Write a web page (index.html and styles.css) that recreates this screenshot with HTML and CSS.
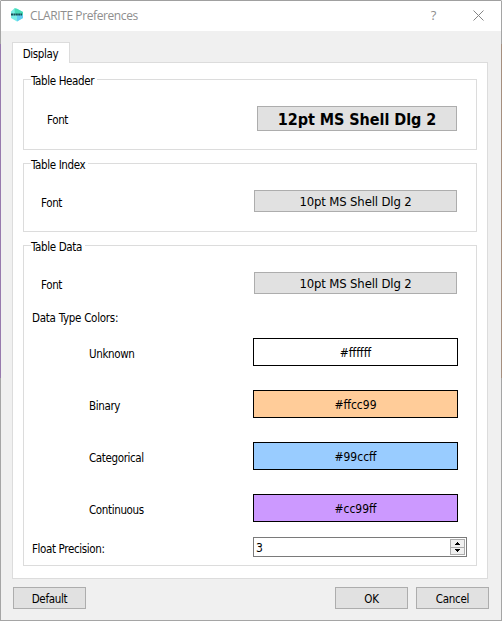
FILE: index.html
```html
<!DOCTYPE html>
<html lang="en">
<head>
<meta charset="utf-8">
<title>CLARITE Preferences</title>
<link rel="stylesheet" href="styles.css">
</head>
<body>
<div class="window">
  <header class="titlebar">
    <svg class="logo" width="14" height="14" viewBox="0 0 14 14"><path d="M1 3.500 4.500.3 7 .8 13 4v6L7 13.500 1 10z" fill="#7aeee6"/><path d="M4.500.3 7 .8 13 4v3H5z" fill="#48dcb8"/><path d="M7 7h6v3L7 13.500z" fill="#62cdf2"/><path d="M1 6.500h11" stroke="#174d58" stroke-width="2" stroke-dasharray="2 .4"/></svg>
    <h1 class="title">CLARITE Preferences</h1>
    <span class="help">?</span>
    <svg class="close" width="11" height="11" viewBox="0 0 11 11"><path d="M.5.5l10 10M10.500.5l-10 10" stroke="#858585" fill="none"/></svg>
  </header>
  <nav class="tabs"><span class="tab">Display</span></nav>
  <main class="panel">
    <section class="group header-group">
      <h2 class="legend"><span>Table Header</span></h2>
      <div class="row"><span class="label">Font</span><button class="button font-button bold">12pt MS Shell Dlg 2</button></div>
    </section>
    <section class="group index-group">
      <h2 class="legend"><span>Table Index</span></h2>
      <div class="row"><span class="label">Font</span><button class="button font-button">10pt MS Shell Dlg 2</button></div>
    </section>
    <section class="group data-group">
      <h2 class="legend"><span>Table Data</span></h2>
      <div class="row"><span class="label">Font</span><button class="button font-button">10pt MS Shell Dlg 2</button></div>
      <p class="subhead">Data Type Colors:</p>
      <div class="colors">
        <div class="color-row"><span class="label">Unknown</span><button class="swatch unknown">#ffffff</button></div>
        <div class="color-row"><span class="label">Binary</span><button class="swatch binary">#ffcc99</button></div>
        <div class="color-row"><span class="label">Categorical</span><button class="swatch categorical">#99ccff</button></div>
        <div class="color-row"><span class="label">Continuous</span><button class="swatch continuous">#cc99ff</button></div>
      </div>
      <div class="precision"><span class="label">Float Precision:</span>
        <div class="spin"><span>3</span>
          <svg width="15" height="16" viewBox="0 0 15 16" shape-rendering="crispEdges"><path d="M.5.5h14v8H.500zM.5 8.500h14v7H.500z" fill="#f0f0f0" stroke="#acacac"/><path d="M7 3h1v1h1v1h1v1H5V5h1V4h1zM5 10h5v1H9v1H8v1H7v-1H6v-1H5z" fill="#000"/></svg>
        </div>
      </div>
    </section>
  </main>
  <footer class="actions"><button class="button">Default</button><span class="spacer"></span><button class="button">OK</button><button class="button">Cancel</button></footer>
</div>
</body>
</html>
```
FILE: styles.css
```css
* { box-sizing: border-box; }
body {
  margin: 0;
  font: 11.5px/14px "DejaVu Sans Condensed", "DejaVu Sans", sans-serif;
  font-stretch: condensed;
  letter-spacing: -0.37px;
  color: #000;
}
button { font: inherit; letter-spacing: inherit; color: inherit; padding: 0; }
h1, h2, p { margin: 0; font: inherit; }
.window {
  width: 502px;
  height: 621px;
  display: flex;
  flex-direction: column;
  border: 1px solid transparent;
  border-top-color: #a0a0a0;
  border-bottom-color: #a5a5a5;
  background:
    linear-gradient(#f0f0f0, #f0f0f0) padding-box,
    linear-gradient(#a5a5a5 44px, #977aad 44px 378px, #a5a5a5 378px) left / 1px 100% no-repeat border-box,
    linear-gradient(#a5a5a5 44px, #a58f7f 44px 378px, #a5a5a5 378px) right / 1px 100% no-repeat border-box;
}
.titlebar {
  height: 30px;
  display: flex;
  align-items: center;
  background: #fff;
  padding: 0 17px 2px 9px;
  color: #8e8e8e;
}
.title { font: 12px/16px "Open Sans", sans-serif; letter-spacing: -0.4px; margin-left: 6px; flex: 1; padding-top: 1px; }
.help { font: 13px/16px "Open Sans", sans-serif; margin-right: 37px; }
.tabs { display: flex; height: 31px; padding: 11px 0 0 11px; }
.tab {
  width: 58px;
  height: 21px;
  background: #fff;
  border: 1px solid #dcdcdc;
  border-bottom: 0;
  text-align: center;
  padding: 4px 1px 0 0;
  z-index: 1;
}
.panel {
  width: 476px;
  height: 517px;
  margin-left: 11px;
  padding: 16px 10px 12px;
  background: #fff;
  border: 1px solid #dcdcdc;
}
.group { border: 1px solid #dcdcdc; }
.header-group { height: 71px; margin-bottom: 13px; }
.index-group { height: 69px; margin-bottom: 13px; }
.data-group { height: 321px; }
.legend { height: 14px; margin: -7px 0 0 7px; }
.legend span { display: inline-block; background: #fff; padding: 1px 3px 0 0; }
.label { padding-top: 3px; }
.row { display: flex; align-items: center; justify-content: space-between; padding: 0 19px 0 17px; height: 22px; margin-top: 19px; }
.header-group .row { padding-left: 23px; height: 25px; }
.button { height: 22px; background: #e1e1e1; border: 1px solid #adadad; }
.font-button { width: 203px; font-size: 13px; letter-spacing: -0.15px; padding-top: 1px; }
.font-button.bold { width: 200px; height: 25px; font-size: 16px; font-weight: bold; letter-spacing: -0.05px; padding-top: 2px; }
.subhead { margin: 17px 0 0 8px; letter-spacing: -0.27px; }
.colors { margin-top: 13px; display: grid; gap: 24px; padding: 0 18px 0 65px; }
.color-row { display: flex; align-items: center; justify-content: space-between; height: 28px; }
.swatch { width: 205px; height: 28px; border: 1px solid #000; font-size: 12px; letter-spacing: 0; padding-top: 2px; }
.unknown { background: #fff; }
.binary { background: #fc9; }
.categorical { background: #9cf; }
.continuous { background: #c9f; }
.precision { display: flex; align-items: center; justify-content: space-between; padding: 0 9px 0 8px; margin-top: 15px; }
.spin { width: 214px; height: 20px; display: flex; align-items: center; justify-content: space-between; background: #fff; border: 1px solid #7a7a7a; padding: 0 1px 0 2px; font-size: 12px; }
.spin span { padding-top: 1px; }
.actions { display: flex; gap: 8px; padding: 8px 12px 0; }
.actions .button { width: 73px; padding-top: 1px; letter-spacing: -0.3px; }
.spacer { flex: 1; }
```
